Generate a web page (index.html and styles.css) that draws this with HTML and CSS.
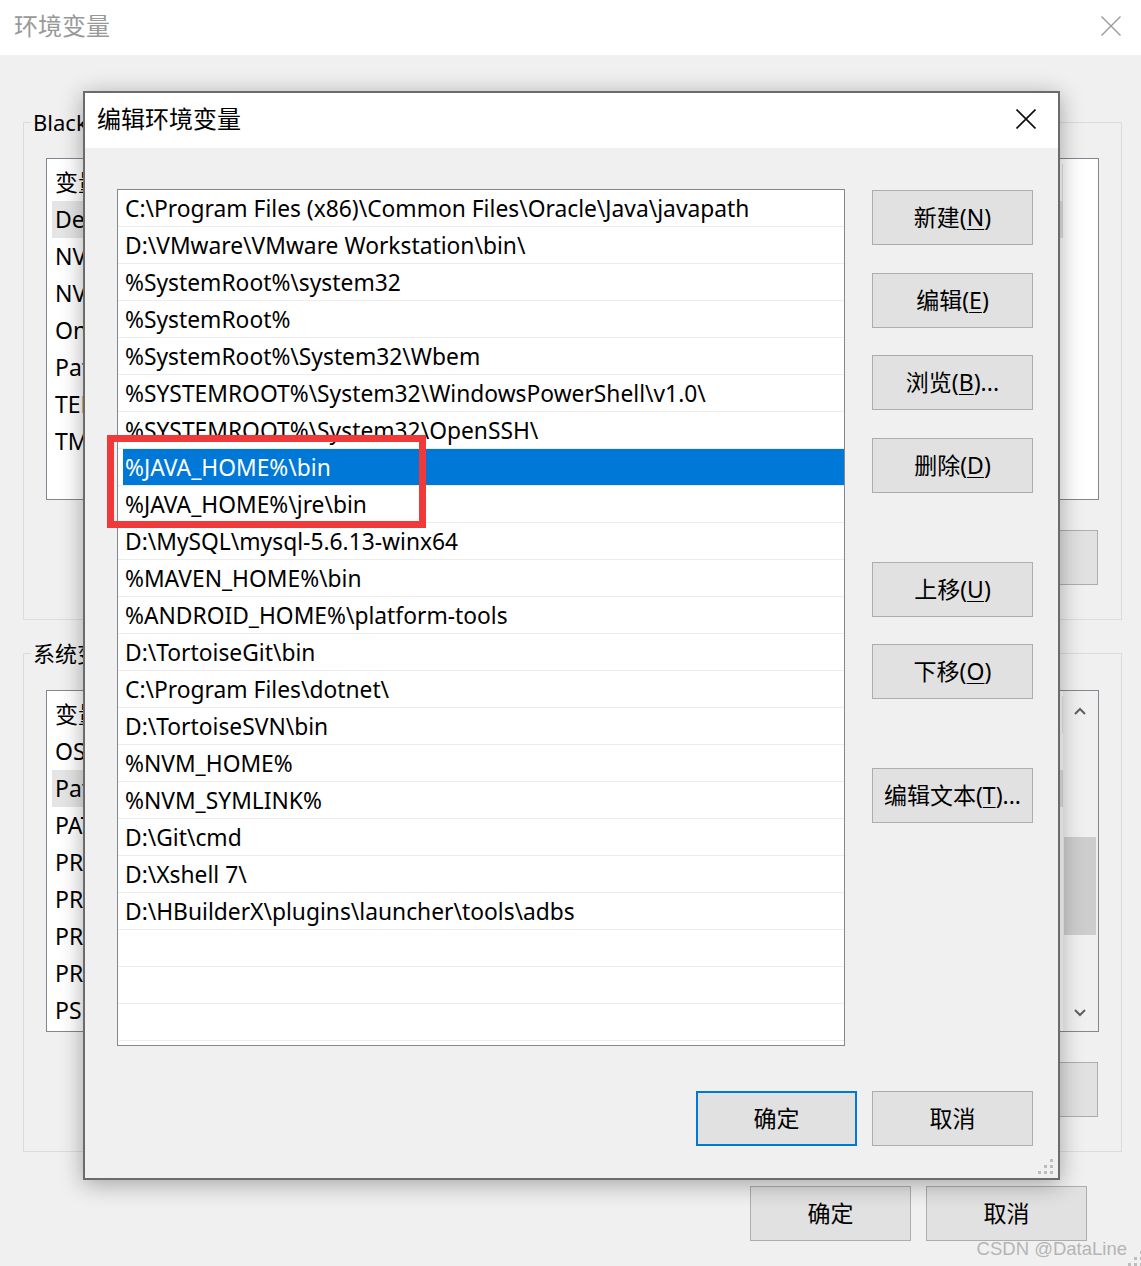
FILE: index.html
```html
<!DOCTYPE html>
<html lang="zh-CN">
<head>
<meta charset="utf-8">
<title>环境变量</title>
<link rel="stylesheet" href="styles.css">
</head>
<body>
<div class="env-window">
  <div class="titlebar">
    <span class="title">环境变量</span>
    <svg class="close-icon" width="20" height="20" viewBox="0 0 20 20"><path d="M0.5 0.5 L19.5 19.5 M19.5 0.5 L0.5 19.5" stroke="#9a9a9a" stroke-width="1.4" fill="none"/></svg>
  </div>

  <div class="env-body">
    <fieldset class="group">
      <legend>Black 的用户变量(<u>U</u>)</legend>
      <div class="var-list">
        <div class="var-rows">
          <div class="var-row head"><span class="c1">变量</span></div>
          <div class="var-row hl"><span class="c1">DevEco Studio</span></div>
          <div class="var-row"><span class="c1">NVM_HOME</span></div>
          <div class="var-row"><span class="c1">NVM_SYMLINK</span></div>
          <div class="var-row"><span class="c1">OneDrive</span></div>
          <div class="var-row"><span class="c1">Path</span></div>
          <div class="var-row"><span class="c1">TEMP</span></div>
          <div class="var-row"><span class="c1">TMP</span></div>
        </div>
        <div class="gutter"></div>
      </div>
      <div class="group-buttons">
        <button class="btn">新建(<u>N</u>)...</button>
        <button class="btn">编辑(<u>E</u>)...</button>
        <button class="btn">删除(<u>D</u>)</button>
      </div>
    </fieldset>

    <fieldset class="group group-sys">
      <legend>系统变量(<u>S</u>)</legend>
      <div class="var-list">
        <div class="var-rows">
          <div class="var-row head"><span class="c1">变量</span></div>
          <div class="var-row"><span class="c1">OS</span></div>
          <div class="var-row hl"><span class="c1">Path</span></div>
          <div class="var-row"><span class="c1">PATHEXT</span></div>
          <div class="var-row"><span class="c1">PROCESSOR_ARCHITECTURE</span></div>
          <div class="var-row"><span class="c1">PROCESSOR_IDENTIFIER</span></div>
          <div class="var-row"><span class="c1">PROCESSOR_LEVEL</span></div>
          <div class="var-row"><span class="c1">PROCESSOR_REVISION</span></div>
          <div class="var-row"><span class="c1">PSModulePath</span></div>
        </div>
        <div class="scrollbar">
          <div class="sb-btn sb-up"><svg width="12" height="8" viewBox="0 0 12 8"><path d="M1 7 L6 2 L11 7" stroke="#606060" stroke-width="2" fill="none"/></svg></div>
          <div class="sb-track"><div class="sb-thumb"></div></div>
          <div class="sb-btn sb-down"><svg width="12" height="8" viewBox="0 0 12 8"><path d="M1 1 L6 6 L11 1" stroke="#606060" stroke-width="2" fill="none"/></svg></div>
        </div>
      </div>
      <div class="group-buttons">
        <button class="btn">新建(<u>W</u>)...</button>
        <button class="btn">编辑(<u>I</u>)...</button>
        <button class="btn">删除(<u>L</u>)</button>
      </div>
    </fieldset>

    <div class="env-footer">
      <button class="btn">确定</button>
      <button class="btn">取消</button>
    </div>
  </div>

  <div class="dialog">
    <div class="dlg-titlebar">
      <span class="dlg-title">编辑环境变量</span>
      <svg class="dlg-close" width="20" height="20" viewBox="0 0 20 20"><path d="M0.5 0.5 L19.5 19.5 M19.5 0.5 L0.5 19.5" stroke="#111" stroke-width="1.7" fill="none"/></svg>
    </div>
    <div class="dlg-body">
      <div class="dlg-main">
        <div class="path-list">
          <div class="path-row"><span class="path-text">C:\Program Files (x86)\Common Files\Oracle\Java\javapath</span></div>
          <div class="path-row"><span class="path-text">D:\VMware\VMware Workstation\bin\</span></div>
          <div class="path-row"><span class="path-text">%SystemRoot%\system32</span></div>
          <div class="path-row"><span class="path-text">%SystemRoot%</span></div>
          <div class="path-row"><span class="path-text">%SystemRoot%\System32\Wbem</span></div>
          <div class="path-row"><span class="path-text">%SYSTEMROOT%\System32\WindowsPowerShell\v1.0\</span></div>
          <div class="path-row"><span class="path-text">%SYSTEMROOT%\System32\OpenSSH\</span></div>
          <div class="path-row selected"><span class="path-text">%JAVA_HOME%\bin</span></div>
          <div class="path-row"><span class="path-text">%JAVA_HOME%\jre\bin</span></div>
          <div class="path-row"><span class="path-text">D:\MySQL\mysql-5.6.13-winx64</span></div>
          <div class="path-row"><span class="path-text">%MAVEN_HOME%\bin</span></div>
          <div class="path-row"><span class="path-text">%ANDROID_HOME%\platform-tools</span></div>
          <div class="path-row"><span class="path-text">D:\TortoiseGit\bin</span></div>
          <div class="path-row"><span class="path-text">C:\Program Files\dotnet\</span></div>
          <div class="path-row"><span class="path-text">D:\TortoiseSVN\bin</span></div>
          <div class="path-row"><span class="path-text">%NVM_HOME%</span></div>
          <div class="path-row"><span class="path-text">%NVM_SYMLINK%</span></div>
          <div class="path-row"><span class="path-text">D:\Git\cmd</span></div>
          <div class="path-row"><span class="path-text">D:\Xshell 7\</span></div>
          <div class="path-row"><span class="path-text">D:\HBuilderX\plugins\launcher\tools\adbs</span></div>
          <div class="path-row"><span class="path-text"></span></div>
          <div class="path-row"><span class="path-text"></span></div>
          <div class="path-row"><span class="path-text"></span></div>
          <div class="path-row"><span class="path-text"></span></div>
        </div>
        <div class="side-buttons">
          <button class="btn">新建(<u>N</u>)</button>
          <button class="btn">编辑(<u>E</u>)</button>
          <button class="btn">浏览(<u>B</u>)...</button>
          <button class="btn">删除(<u>D</u>)</button>
          <button class="btn sep">上移(<u>U</u>)</button>
          <button class="btn">下移(<u>O</u>)</button>
          <button class="btn sep">编辑文本(<u>T</u>)...</button>
        </div>
      </div>
      <div class="dlg-footer">
        <button class="btn default">确定</button>
        <button class="btn">取消</button>
      </div>
    </div>
    <div class="annotation"></div>
    <svg class="grip" width="15" height="15" viewBox="0 0 15 15" fill="#bdbdbd"><rect x="12" y="0" width="3" height="3"/><rect x="6" y="6" width="3" height="3"/><rect x="12" y="6" width="3" height="3"/><rect x="0" y="12" width="3" height="3"/><rect x="6" y="12" width="3" height="3"/><rect x="12" y="12" width="3" height="3"/></svg>
  </div>

  <div class="watermark">CSDN @DataLine</div>
  <svg class="win-grip" width="15" height="15" viewBox="0 0 15 15" fill="#bdbdbd"><rect x="12" y="0" width="3" height="3"/><rect x="6" y="6" width="3" height="3"/><rect x="12" y="6" width="3" height="3"/><rect x="0" y="12" width="3" height="3"/><rect x="6" y="12" width="3" height="3"/><rect x="12" y="12" width="3" height="3"/></svg>
</div>
</body>
</html>
```

FILE: styles.css
```css
* { box-sizing: border-box; }
html, body { margin: 0; padding: 0; }
body {
  background: #f0f0f0;
  font-family: "Noto Sans", "Noto Sans CJK SC", sans-serif;
  font-size: 22px;
  color: #000;
}

.env-window {
  position: relative;
  width: 1141px;
  height: 1266px;
  overflow: hidden;
  background: #f0f0f0;
}

/* background window title bar */
.titlebar {
  height: 55px;
  background: #fff;
  display: flex;
  align-items: center;
  justify-content: space-between;
  padding: 0 20px 3px 14px;
}
.title {
  font-size: 24px;
  line-height: 30px;
  color: #999;
}

.env-body { padding-top: 52px; }

/* group boxes */
.group {
  margin: 0 0 0 23px;
  width: 1099px;
  min-width: 0;
  border: 1px solid #dcdcdc;
  padding: 21px 0 34px;
}
.group legend {
  margin-left: 7px;
  padding: 0 2px;
  font-size: 22px;
  line-height: 30px;
}
.group-sys { margin-top: 18px; padding-top: 22px; }

.var-list {
  margin: 0 22px;
  height: 342px;
  border: 1px solid #828790;
  background: #fff;
  display: flex;
  overflow: hidden;
}
.var-rows {
  flex: 1;
  min-width: 0;
  padding: 5px 0 0 5px;
}
.var-row {
  display: flex;
  height: 37px;
  line-height: 37px;
  white-space: nowrap;
  overflow: hidden;
  font-size: 23px;
}
.var-row .c1 { padding-left: 3px; }
.var-row.hl { background: #e5e5e5; border-right: 1px solid #dadada; }
.var-row.head { border-right: 1px solid #e3e3e3; }
.gutter { width: 35px; }

.scrollbar {
  width: 35px;
  background: #f0f0f0;
  padding: 0 2px 0 1px;
  display: flex;
  flex-direction: column;
}
.sb-btn { display: flex; align-items: center; justify-content: center; }
.sb-up { height: 40px; }
.sb-down { height: 36px; }
.sb-track { flex: 1; }
.sb-thumb { margin-top: 106px; height: 98px; background: #cdcdcd; }

.group-buttons {
  display: flex;
  justify-content: flex-end;
  gap: 15px;
  margin: 30px 23px 0;
}

.env-footer {
  display: flex;
  justify-content: flex-end;
  gap: 15px;
  padding: 34px 54px 0 0;
}

/* buttons */
.btn {
  width: 161px;
  height: 55px;
  padding: 0;
  background: #e1e1e1;
  border: 1px solid #adadad;
  font-family: inherit;
  font-size: 23px;
  color: #000;
  line-height: 1;
}
.btn u { text-underline-offset: 3px; text-decoration-thickness: 1px; }
.btn.default { border: 2px solid #0078d7; }

/* edit dialog */
.dialog {
  position: absolute;
  left: 83px;
  top: 91px;
  width: 977px;
  height: 1089px;
  border: 2px solid #6b6b6b;
  background: #f0f0f0;
  box-shadow: 0 4px 22px rgba(0, 0, 0, 0.32);
  display: flex;
  flex-direction: column;
}
.dlg-titlebar {
  height: 55px;
  flex: none;
  background: #fff;
  display: flex;
  align-items: center;
  justify-content: space-between;
  padding: 0 22px 3px 12px;
}
.dlg-title { font-size: 24px; line-height: 30px; }

.dlg-body {
  flex: 1;
  min-height: 0;
  padding: 41px 25px 32px 32px;
  display: flex;
  flex-direction: column;
}
.dlg-main { display: flex; gap: 27px; }

.path-list {
  width: 728px;
  height: 857px;
  border: 1px solid #828790;
  background: #fff;
  overflow: hidden;
}
.path-row {
  display: flex;
  height: 37px;
  border-bottom: 1px solid #ececec;
}
.path-text {
  flex: 1;
  margin-left: 5px;
  padding-left: 2px;
  height: 36px;
  line-height: 37px;
  font-size: 22.8px;
  white-space: nowrap;
}
.path-row.selected .path-text { background: #0078d7; color: #fff; }

.side-buttons {
  display: flex;
  flex-direction: column;
  gap: 27.5px;
  padding-top: 1px;
}
.side-buttons .sep { margin-top: 41.5px; }

.dlg-footer {
  display: flex;
  justify-content: flex-end;
  gap: 15px;
  margin-top: 45px;
}

.annotation {
  position: absolute;
  left: 22px;
  top: 342px;
  width: 319px;
  height: 93px;
  border: 7px solid #f03a3a;
}
.grip { position: absolute; right: 5px; bottom: 4px; }

.watermark {
  position: absolute;
  right: 14px;
  bottom: 6px;
  font-family: "Liberation Sans", Arial, sans-serif;
  font-size: 18.5px;
  color: #b5b5b5;
}
.win-grip { position: absolute; right: -2px; bottom: 0; }
```
